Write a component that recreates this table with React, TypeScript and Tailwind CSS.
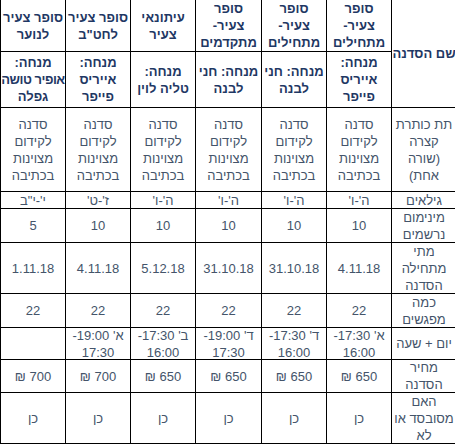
import * as React from 'react';

type Cell = { lines: string[]; head?: boolean };

const cols = ['סופר צעיר-מתחילים', 'סופר צעיר-מתחילים', 'סופר צעיר-מתקדמים', 'עיתונאי צעיר', 'סופר צעיר לחט"ב', 'סופר צעיר לנוער'];

const headers: string[][] = [
  ['סופר', 'צעיר-', 'מתחילים'],
  ['סופר', 'צעיר-', 'מתחילים'],
  ['סופר', 'צעיר-', 'מתקדמים'],
  ['עיתונאי', 'צעיר'],
  ['סופר צעיר', 'לחט"ב'],
  ['סופר צעיר', 'לנוער'],
];

const mentors: string[][] = [
  ['מנחה:', 'אייריס', 'פייפר'],
  ['מנחה: חני', 'לבנה'],
  ['מנחה: חני', 'לבנה'],
  ['מנחה:', 'טליה לוין'],
  ['מנחה:', 'אייריס', 'פייפר'],
  ['מנחה:', 'אופיר טושה', 'גפלה'],
];

const desc = ['סדנה', 'לקידום', 'מצוינות', 'בכתיבה'];

const rows: { label: string[]; values: string[][] }[] = [
  { label: ['תת כותרת', 'קצרה', '(שורה', 'אחת)'], values: cols.map(() => desc) },
  { label: ['גילאים'], values: [["ה'-ו'"], ["ה'-ו'"], ["ה'-ו'"], ["ה'-ו'"], ["ז'-ט'"], ['י\'-י"ב']] },
  { label: ['מינימום', 'נרשמים'], values: [['10'], ['10'], ['10'], ['10'], ['10'], ['5']] },
  {
    label: ['מתי', 'מתחילה', 'הסדנה'],
    values: [['4.11.18'], ['31.10.18'], ['31.10.18'], ['5.12.18'], ['4.11.18'], ['1.11.18']],
  },
  { label: ['כמה', 'מפגשים'], values: cols.map(() => ['22']) },
  {
    label: ['יום + שעה'],
    values: [
      ["א' 17:30-", '16:00'],
      ["ד' 17:30-", '16:00'],
      ["ד' 19:00-", '17:30'],
      ["ב' 17:30-", '16:00'],
      ["א' 19:00-", '17:30'],
      [],
    ],
  },
  {
    label: ['מחיר', 'הסדנה'],
    values: [['650 ₪'], ['650 ₪'], ['650 ₪'], ['650 ₪'], ['700 ₪'], ['700 ₪']],
  },
  { label: ['האם', 'מסובסד או', 'לא'], values: cols.map(() => ['כן']) },
];

const TableCell = ({ lines, head }: Cell) => (
  <div
    className={`flex flex-col items-center justify-center border-b border-l border-black text-center leading-[17px] ${
      head ? 'font-bold text-[#1f3864]' : 'text-[#44546a]'
    }`}
  >
    {lines.map((l, i) => (
      // the long mentor name sits tight in its column in the original
      <span key={i} className={`whitespace-nowrap ${l.length > 9 ? 'tracking-[-0.5px]' : ''}`}>
        {l}
      </span>
    ))}
  </div>
);

export default function App() {
  return (
    <div className="w-[455px] h-[445px] overflow-hidden bg-white" style={{ fontFamily: '"Liberation Sans", Arial, "DejaVu Sans", sans-serif' }}>
      <div
        dir="rtl"
        className="grid w-[456px] grid-cols-[65px_65px_65px_66px_65px_65px_65px] grid-rows-[52px_56px_84px_17px_34px_51px_34px_32px_33px_51px] text-[13px]"
      >
        <div className="row-span-2 flex items-center justify-center border-b border-l border-black font-bold text-[#1f3864] leading-[17px]">
          שם הסדנה
        </div>
        {headers.map((h, i) => (
          <TableCell key={`h${i}`} lines={h} head />
        ))}
        {mentors.map((m, i) => (
          <TableCell key={`m${i}`} lines={m} head />
        ))}
        {rows.map((row, r) => (
          <React.Fragment key={r}>
            <TableCell lines={row.label} />
            {row.values.map((v, i) => (
              <TableCell key={i} lines={v} />
            ))}
          </React.Fragment>
        ))}
      </div>
    </div>
  );
}
